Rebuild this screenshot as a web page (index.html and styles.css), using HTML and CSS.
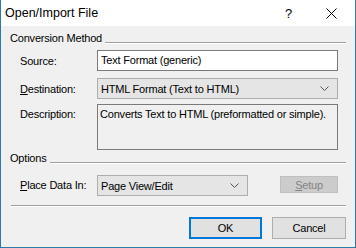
FILE: index.html
```html
<!DOCTYPE html>
<html lang="en">
<head>
    <meta charset="UTF-8">
    <title>Open/Import File</title>
    <link rel="stylesheet" href="styles.css">
</head>
<body>
    <div class="dialog">
        <div class="titlebar">
            <span class="title">Open/Import File</span>
            <span class="help">?</span>
            <span class="close">
                <svg width="11" height="11" viewBox="0 0 11 11"><path d="M0.5 0.5 L10.5 10.5 M10.5 0.5 L0.5 10.5" stroke="#000" stroke-width="1" fill="none"/></svg>
            </span>
        </div>
        <div class="content">
            <div class="group-head">
                <span>Conversion Method</span>
                <span class="rule"></span>
            </div>
            <div class="fields">
                <div class="row row-source">
                    <label>Source:</label>
                    <div class="textbox">Text Format (generic)</div>
                </div>
                <div class="row row-dest">
                    <label><u>D</u>estination:</label>
                    <div class="select">
                        <span>HTML Format (Text to HTML)</span>
                        <svg class="chevron" width="9" height="5" viewBox="0 0 9 5"><path d="M0.5 0.5 L4.5 4.5 L8.5 0.5" stroke="#555" stroke-width="1" fill="none"/></svg>
                    </div>
                </div>
                <div class="row row-desc">
                    <label>Description:</label>
                    <div class="memo">Converts Text to HTML (preformatted or simple).</div>
                </div>
            </div>
            <div class="group-head options-head">
                <span>Options</span>
                <span class="rule"></span>
            </div>
            <div class="options-row">
                <label><u>P</u>lace Data In:</label>
                <div class="select select-small">
                    <span>Page View/Edit</span>
                    <svg class="chevron" width="9" height="5" viewBox="0 0 9 5"><path d="M0.5 0.5 L4.5 4.5 L8.5 0.5" stroke="#555" stroke-width="1" fill="none"/></svg>
                </div>
                <button class="setup" disabled><u>S</u>etup</button>
            </div>
            <div class="separator"></div>
            <div class="actions">
                <button class="btn ok">OK</button>
                <button class="btn cancel">Cancel</button>
            </div>
        </div>
    </div>
</body>
</html>
```

FILE: styles.css
```css
* {
    box-sizing: border-box;
}

body {
    margin: 0;
    font-family: "Liberation Sans", Arial, sans-serif;
    font-size: 11px;
    letter-spacing: -0.2px;
    color: #000;
    background: #f0f0f0;
}

.dialog {
    width: 356px;
    height: 248px;
    border: 1px solid #2b7ba6;
    border-top: none;
    background: #f0f0f0;
}

.titlebar {
    height: 26px;
    background: #fff;
    display: flex;
    align-items: center;
    padding-left: 4px;
}

.title {
    font-size: 12.5px;
    letter-spacing: 0;
    flex: 1;
}

.help {
    font-size: 13px;
    width: 10px;
    margin-right: 31px;
}

.close {
    display: flex;
    margin-right: 18px;
    margin-top: 1px;
}

.content {
    padding: 0 9px 0 9px;
}

/* group box header with a rule after the label */
.group-head {
    display: flex;
    height: 14px;
    line-height: 14px;
    margin-top: 5px;
}

.group-head .rule {
    flex: 1;
    height: 2px;
    margin-top: 11px;
    margin-left: 3px;
    border-top: 1px solid #a0a0a0;
    border-bottom: 1px solid #fff;
}

.fields {
    padding-left: 10px;
    padding-right: 8px;
}

.row {
    display: flex;
    align-items: center;
}

.row label,
.options-row label {
    width: 77px;
}

.row-source {
    margin-top: 5px;
}

.row-dest {
    margin-top: 7px;
}

.row-desc {
    margin-top: 5px;
    align-items: flex-start;
}

.row-desc label {
    padding-top: 4px;
}

.textbox {
    flex: 1;
    height: 21px;
    background: #fff;
    border: 1px solid #7a7a7a;
    padding: 0 3px;
    line-height: 19px;
}

.select {
    flex: 1;
    height: 21px;
    background: #e5e5e5;
    border: 1px solid #adadad;
    padding: 0 3px;
    display: flex;
    align-items: center;
    justify-content: space-between;
}

.chevron {
    margin-right: 5px;
}

.memo {
    flex: 1;
    height: 46px;
    border: 1px solid #7a7a7a;
    padding: 3px 2px;
}

.options-head {
    margin-top: 1px;
}

.options-row {
    display: flex;
    align-items: flex-start;
    padding-left: 10px;
    margin-top: 10px;
}

.options-row label {
    line-height: 21px;
}

.select-small {
    flex: none;
    width: 151px;
}

.setup {
    margin-left: 32px;
    margin-top: 1px;
    width: 58px;
    height: 17px;
    background: #cccccc;
    border: 1px solid #bfbfbf;
    color: #838383;
    font-family: inherit;
    font-size: 11px;
    letter-spacing: inherit;
    padding: 0;
}

.separator {
    margin-top: 9px;
    margin-left: 1px;
    height: 2px;
    border-top: 1px solid #a0a0a0;
    border-bottom: 1px solid #fff;
}

.actions {
    display: flex;
    justify-content: flex-end;
    gap: 10px;
    margin-top: 10px;
}

.btn {
    height: 22px;
    background: #e1e1e1;
    border: 1px solid #adadad;
    font-family: inherit;
    font-size: 11px;
    letter-spacing: inherit;
    color: #000;
    padding: 0;
}

.ok {
    width: 73px;
    border: 2px solid #0078d7;
}

.cancel {
    width: 74px;
}
```
